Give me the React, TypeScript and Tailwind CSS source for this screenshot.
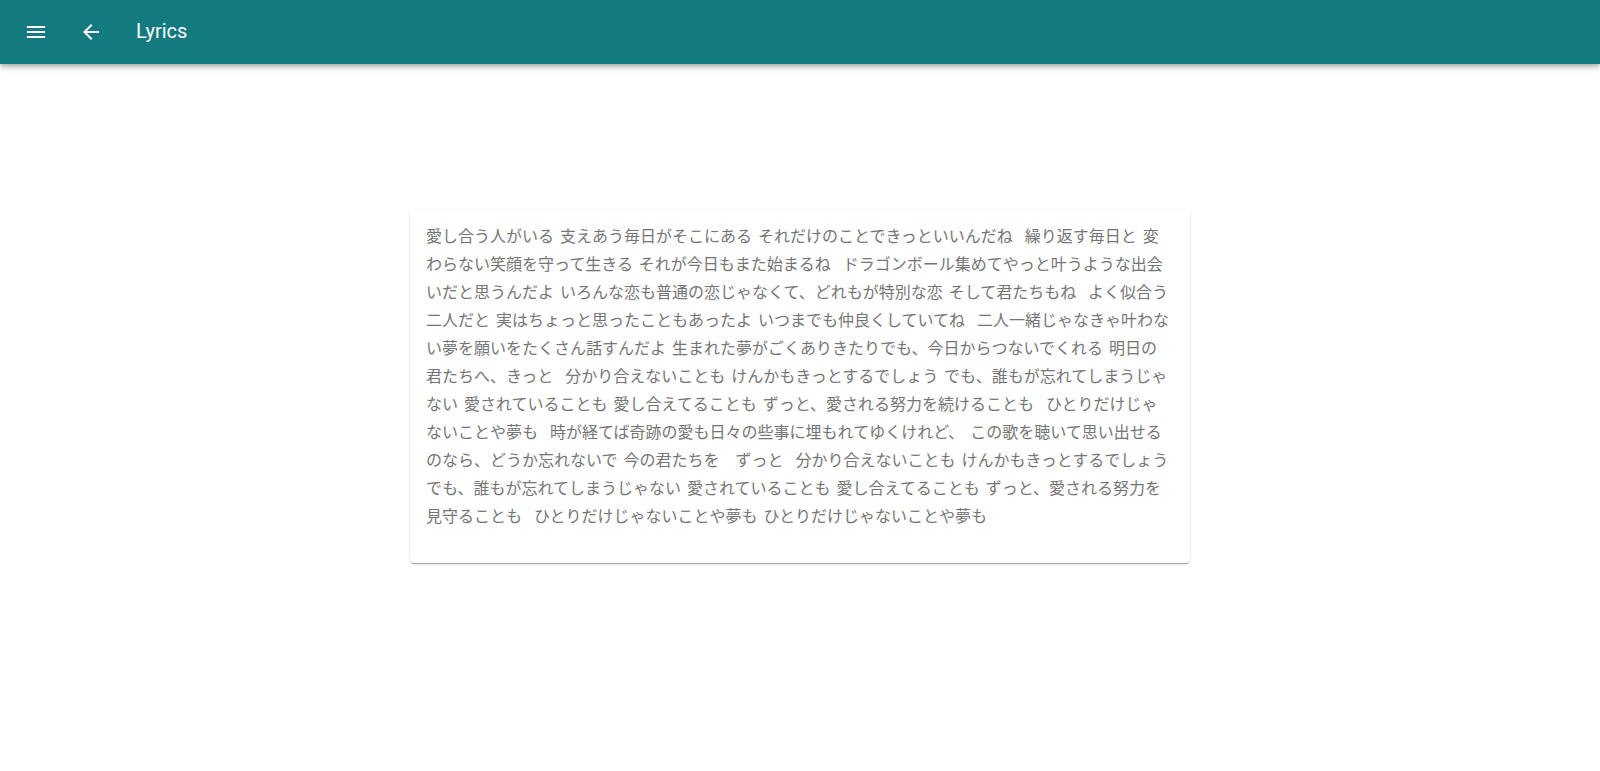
import React from "react";

const lines = [
  "愛し合う人がいる 支えあう毎日がそこにある それだけのことできっといいんだね  繰り返す毎日と 変",
  "わらない笑顔を守って生きる それが今日もまた始まるね  ドラゴンボール集めてやっと叶うような出会",
  "いだと思うんだよ いろんな恋も普通の恋じゃなくて、どれもが特別な恋 そして君たちもね  よく似合う",
  "二人だと 実はちょっと思ったこともあったよ いつまでも仲良くしていてね  二人一緒じゃなきゃ叶わな",
  "い夢を願いをたくさん話すんだよ 生まれた夢がごくありきたりでも、今日からつないでくれる 明日の",
  "君たちへ、きっと  分かり合えないことも けんかもきっとするでしょう でも、誰もが忘れてしまうじゃ",
  "ない 愛されていることも 愛し合えてることも ずっと、愛される努力を続けることも  ひとりだけじゃ",
  "ないことや夢も  時が経てば奇跡の愛も日々の些事に埋もれてゆくけれど、 この歌を聴いて思い出せる",
  "のなら、どうか忘れないで 今の君たちを　ずっと  分かり合えないことも けんかもきっとするでしょう",
  "でも、誰もが忘れてしまうじゃない 愛されていることも 愛し合えてることも ずっと、愛される努力を",
  "見守ることも  ひとりだけじゃないことや夢も ひとりだけじゃないことや夢も",
];

export default function App() {
  return (
    <div
      className="min-h-screen bg-white"
      style={{ fontFamily: 'Roboto, "Noto Sans CJK JP", sans-serif' }}
    >
      <header className="relative z-10 flex h-16 items-center bg-[#137a7f] text-white shadow-[0_2px_4px_-1px_rgba(0,0,0,0.2),0_4px_5px_0_rgba(0,0,0,0.14),0_1px_10px_0_rgba(0,0,0,0.12)]">
        <div className="ml-6 flex h-6 w-6 items-center justify-center">
          <svg width="24" height="24" viewBox="0 0 24 24" fill="white">
            <path d="M3 18h18v-2H3v2zm0-5h18v-2H3v2zm0-7v2h18V6H3z" />
          </svg>
        </div>
        <div className="ml-[31px] flex h-6 w-6 items-center justify-center">
          <svg width="24" height="24" viewBox="0 0 24 24" fill="white">
            <path d="M20 11H7.83l5.59-5.59L12 4l-8 8 8 8 1.41-1.41L7.83 13H20v-2z" />
          </svg>
        </div>
        <h1 className="ml-[33px] pb-[3px] text-[20px] font-normal leading-none">Lyrics</h1>
      </header>
      <main className="flex justify-center pt-[146px]">
        <div className="w-[780px] rounded-[4px] bg-white px-4 pt-[13px] pb-8 shadow-[0_2px_1px_-1px_rgba(0,0,0,0.2),0_1px_1px_0_rgba(0,0,0,0.14),0_1px_3px_0_rgba(0,0,0,0.12)]">
          <div className="text-[16px] leading-[28px] text-[#757575] [word-spacing:2px]">
            {lines.map((l, i) => (
              <div key={i} className="whitespace-pre">
                {l}
              </div>
            ))}
          </div>
        </div>
      </main>
    </div>
  );
}
